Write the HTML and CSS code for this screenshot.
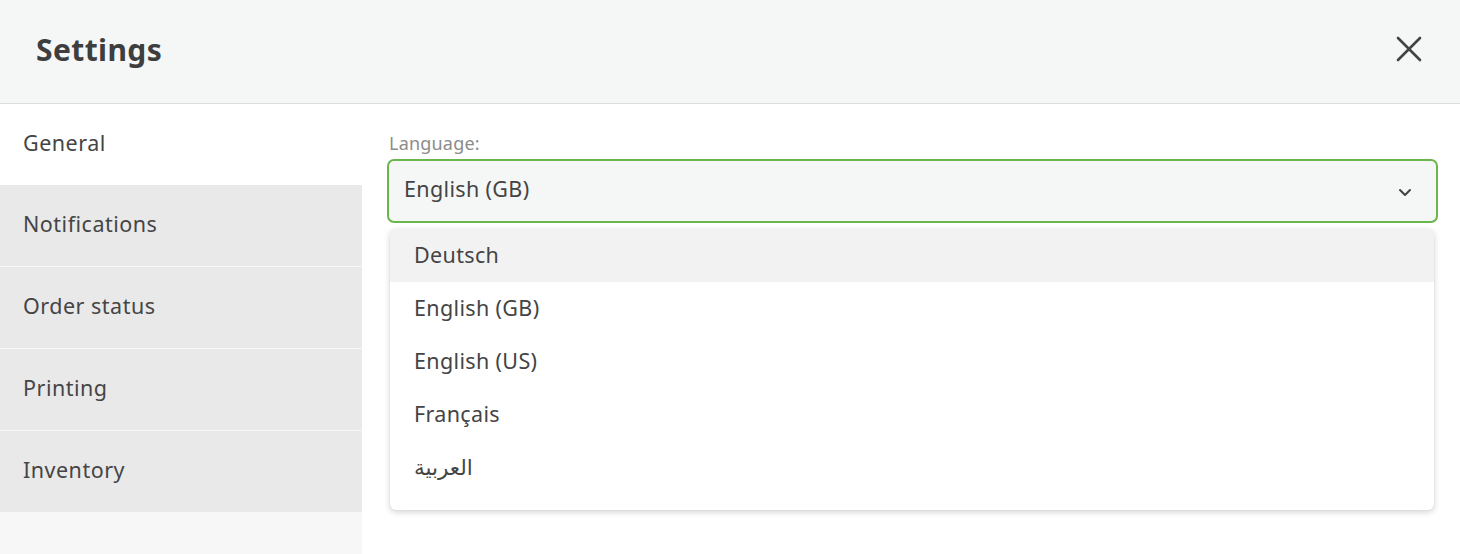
FILE: index.html
```html
<!DOCTYPE html>
<html lang="en">
<head>
<meta charset="utf-8">
<title>Settings</title>
<link rel="stylesheet" href="styles.css">
</head>
<body>
<div class="dialog">
  <header class="header">
    <h1 class="title">Settings</h1>
    <button class="close" aria-label="Close">
      <svg width="26" height="26" viewBox="0 0 26 26"><path d="M2 2 L24 24 M24 2 L2 24" stroke="#434343" stroke-width="2.6" stroke-linecap="round" fill="none"/></svg>
    </button>
  </header>
  <div class="body">
    <nav class="sidebar">
      <div class="nav-item active">General</div>
      <div class="nav-item">Notifications</div>
      <div class="nav-item">Order status</div>
      <div class="nav-item">Printing</div>
      <div class="nav-item">Inventory</div>
      <div class="nav-rest"></div>
    </nav>
    <main class="content">
      <label class="field-label">Language:</label>
      <div class="select-wrap">
        <div class="select">
          <span class="select-value">English (GB)</span>
          <svg class="chevron" width="14" height="9" viewBox="0 0 14 9"><path d="M2 2 L7 7 L12 2" stroke="#434343" stroke-width="2" stroke-linecap="round" stroke-linejoin="round" fill="none"/></svg>
        </div>
        <ul class="menu">
          <li class="option hover">Deutsch</li>
          <li class="option">English (GB)</li>
          <li class="option">English (US)</li>
          <li class="option">Français</li>
          <li class="option" lang="ar">العربية</li>
        </ul>
      </div>
    </main>
  </div>
</div>
</body>
</html>
```
FILE: styles.css
```css
* { box-sizing: border-box; }
html, body { margin: 0; padding: 0; }
body {
  font-family: "Noto Sans", "Open Sans", sans-serif;
  color: #444444;
  background: #ffffff;
  width: 1460px;
  height: 554px;
  overflow: hidden;
}
.dialog { display: flex; flex-direction: column; height: 554px; }
.header {
  height: 104px;
  background: #f5f6f6;
  border-bottom: 1px solid #dcdcdc;
  display: flex;
  align-items: center;
  justify-content: space-between;
  padding: 0 38px 5px 36px;
  flex: none;
}
.title {
  margin: 0;
  font-size: 30px;
  font-weight: 700;
  color: #3e3e3e;
  letter-spacing: 0.4px;
}
.close {
  background: none;
  border: 0;
  padding: 0;
  width: 26px;
  height: 26px;
  cursor: pointer;
  display: flex;
}
.body { display: flex; flex: 1; min-height: 0; }
.sidebar {
  width: 362px;
  flex: none;
  display: flex;
  flex-direction: column;
  background: #f7f7f7;
}
.nav-item {
  height: 82px;
  display: flex;
  align-items: center;
  padding-left: 23px;
  padding-bottom: 4px;
  font-size: 21.5px;
  letter-spacing: 0.5px;
  color: #454545;
  background: #e9e9e9;
  border-bottom: 1px solid #f7f7f7;
}
.nav-item.active { background: #ffffff; height: 81px; border-bottom: 0; }
.nav-item:last-of-type { border-bottom: 0; }
.nav-rest { flex: 1; }
.content { flex: 1; padding: 27px 22px 0 25px; }
.field-label {
  display: block;
  font-size: 18px;
  letter-spacing: 0.2px;
  color: #8c8c8c;
  margin-left: 2px;
  line-height: 24px;
  margin-bottom: 4px;
}
.select-wrap { position: relative; }
.select {
  height: 64px;
  border: 2px solid #6ab64a;
  border-radius: 7px;
  background: #f5f6f6;
  display: flex;
  align-items: center;
  justify-content: space-between;
  padding: 0 24px 6px 15px;
  font-size: 21.5px;
  letter-spacing: 0.35px;
  color: #444444;
}
.chevron { margin-top: 8px; }
.menu {
  position: absolute;
  top: 70px;
  left: 3px;
  right: 4px;
  margin: 0;
  padding: 0 0 16px 0;
  list-style: none;
  background: #ffffff;
  border-radius: 6px;
  box-shadow: 0 2px 6px rgba(0,0,0,0.18), 0 0 1px rgba(0,0,0,0.12);
}
.option {
  height: 53px;
  display: flex;
  align-items: center;
  padding-left: 24px;
  padding-bottom: 2px;
  font-size: 21.5px;
  letter-spacing: 0.35px;
  color: #444444;
}
.option.hover { background: #f2f2f2; border-radius: 6px 6px 0 0; }
.option[lang="ar"] { font-family: "Noto Sans", "DejaVu Sans", sans-serif; letter-spacing: 0; }
```
